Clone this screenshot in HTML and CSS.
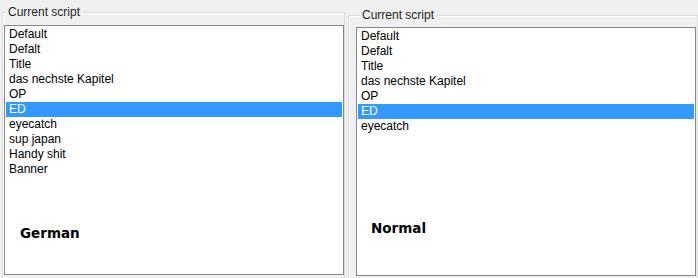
FILE: index.html
```html
<!DOCTYPE html>
<html lang="en">
<head>
<meta charset="UTF-8">
<title>Current script</title>
<link rel="stylesheet" href="styles.css">
</head>
<body>
  <div class="panels">
    <fieldset class="group group-left">
      <legend>Current script</legend>
      <div class="listbox">
        <div class="item">Default</div>
        <div class="item">Defalt</div>
        <div class="item">Title</div>
        <div class="item">das nechste Kapitel</div>
        <div class="item">OP</div>
        <div class="item selected">ED</div>
        <div class="item">eyecatch</div>
        <div class="item">sup japan</div>
        <div class="item">Handy shit</div>
        <div class="item">Banner</div>
        <div class="caption caption-german">German</div>
      </div>
    </fieldset>
    <fieldset class="group group-right">
      <legend>Current script</legend>
      <div class="listbox">
        <div class="item">Default</div>
        <div class="item">Defalt</div>
        <div class="item">Title</div>
        <div class="item">das nechste Kapitel</div>
        <div class="item">OP</div>
        <div class="item selected">ED</div>
        <div class="item">eyecatch</div>
        <div class="caption caption-normal">Normal</div>
      </div>
    </fieldset>
  </div>
</body>
</html>
```

FILE: styles.css
```css
html, body {
  margin: 0;
  padding: 0;
}

body {
  width: 698px;
  height: 278px;
  overflow: hidden;
  background: #f0f0f0;
  font-family: "Liberation Sans", Arial, sans-serif;
  font-size: 12px;
  color: #000;
}

.panels {
  display: flex;
  align-items: flex-start;
  height: 278px;
  overflow: hidden;
}

/* group boxes */
.group {
  margin: 0;
  padding: 0;
  border: 1px solid #dcdcdc;
  box-shadow: inset 1px 1px 0 #fff;
  height: 300px;
  box-sizing: border-box;
}

.group legend {
  padding: 0 2px;
  margin-left: 3px;
  line-height: 14px;
  color: #1e1e1e;
}

.group-left {
  margin: 5px 0 0 2px;
  width: 344px;
}

.group-right {
  margin: 8px 0 0 3px;
  width: 360px;
}

.group-right legend {
  margin-left: 11px;
}

/* list boxes */
.listbox {
  background: #fff;
  border: 1px solid #828790;
  padding: 1px;
  width: 340px;
  box-sizing: border-box;
  margin-left: 1px;
  margin-top: 6px;
}

.group-left .listbox {
  height: 250px;
}

.group-right .listbox {
  margin-left: 7px;
  height: 249px;
  margin-top: 5px;
}

.item {
  height: 15px;
  line-height: 15px;
  padding-left: 3px;
  white-space: nowrap;
}

.item.selected {
  background: #3399ff;
  color: #fff;
}

.caption {
  font-family: "DejaVu Sans", Verdana, sans-serif;
  font-weight: bold;
  font-size: 13.5px;
  line-height: 16px;
}

.caption-german {
  margin-top: 48px;
  padding-left: 14px;
}

.caption-normal {
  margin-top: 86px;
  padding-left: 13px;
}
```
